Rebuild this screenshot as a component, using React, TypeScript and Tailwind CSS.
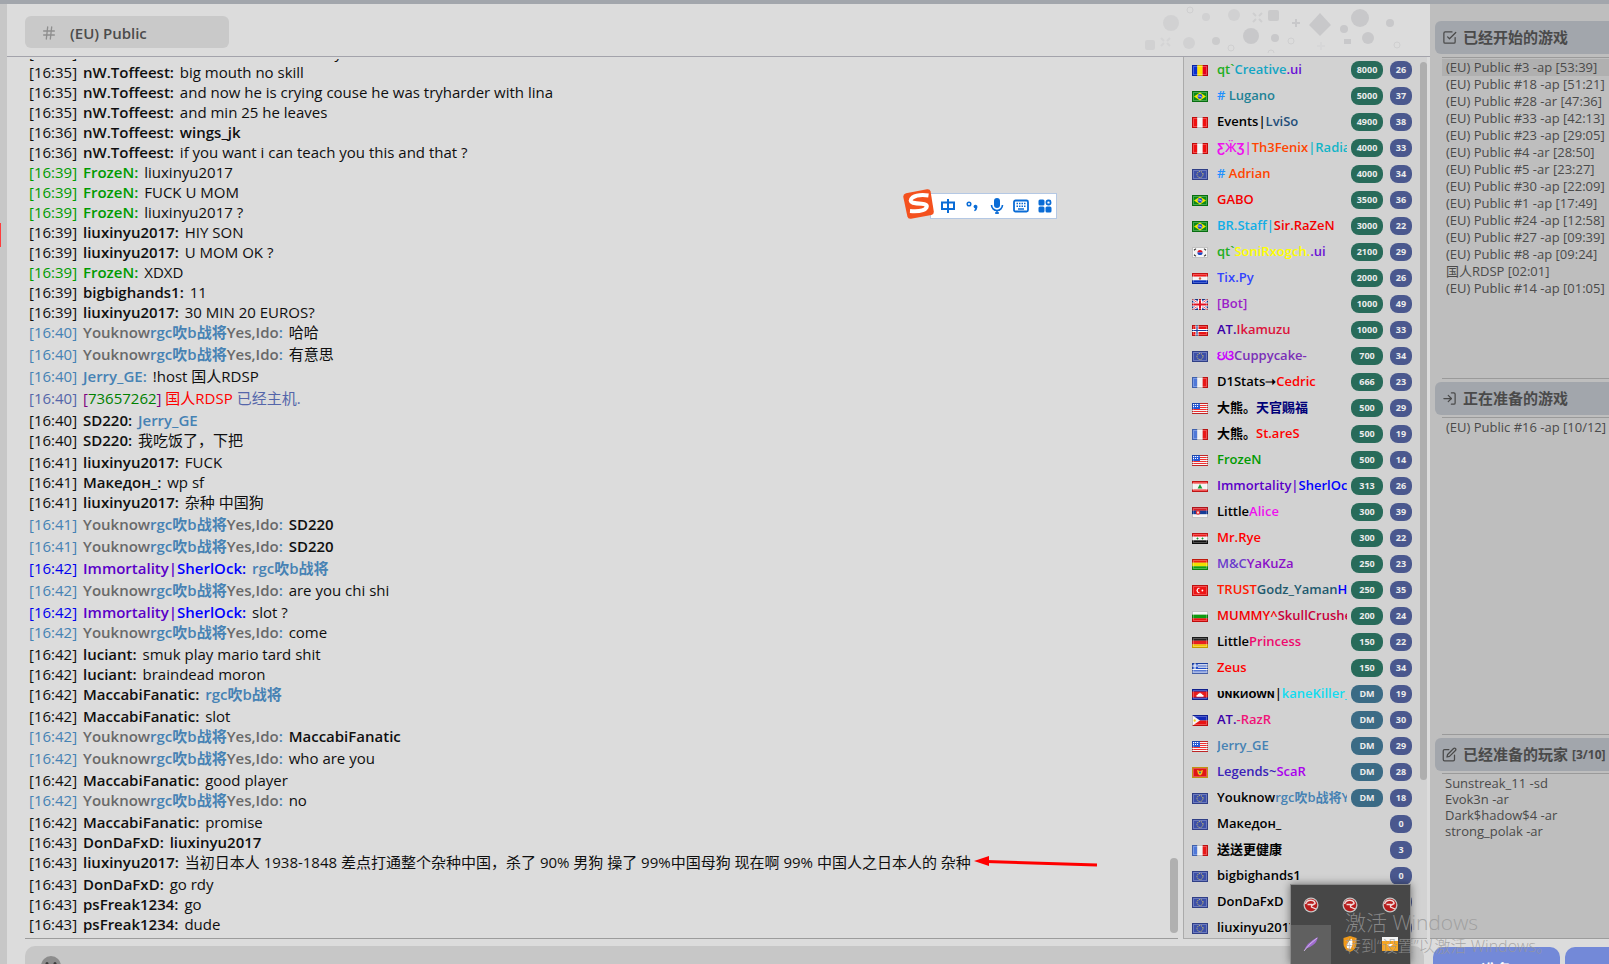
import type { ReactNode } from 'react'
import { FiCheckSquare, FiEdit, FiHash, FiLogIn } from 'react-icons/fi'

// ─── Types ────────────────────────────────────────────────────────────────────

// text, color, bold
type Part = [string, string?, boolean?]

interface Message {
  time: string
  timeColor?: string
  from?: Part[]
  body: Part[]
}

interface Player {
  flag: string
  name: Part[]
  rank?: string
  level: string
}

// ─── Data ─────────────────────────────────────────────────────────────────────

const INK = '#0f0f0f'
const STEEL = '#4682b4'
const GREEN = '#009a00'

const plain = (time: string, name: string, body: string): Message => ({
  time,
  from: [[name, INK]],
  body: [[body, INK]],
})

const mention = (time: string, name: string, body: string, color = INK): Message => ({
  time,
  from: [[name, INK]],
  body: [[body, color, true]],
})

const frozen = (body: string): Message => ({
  time: '16:39',
  timeColor: GREEN,
  from: [['FrozeN', GREEN]],
  body: [[body, INK]],
})

const youknow = (time: string, body: string, bold = false): Message => ({
  time,
  timeColor: STEEL,
  from: [
    ['Youknow', '#696969'],
    ['rgc吹b战将', STEEL],
    ['Yes,Ido', '#696969'],
  ],
  body: [[body, INK, bold]],
})

const sherlock = (body: Part): Message => ({
  time: '16:42',
  timeColor: '#0000ee',
  from: [
    ['Immortality|', '#5a00c8'],
    ['SherlOck', '#0000ff'],
  ],
  body: [body],
})

const messages: Message[] = [
  plain('16:35', 'nW.Toffeest', 'he lost mid alone and y'),
  plain('16:35', 'nW.Toffeest', 'big mouth no skill'),
  plain('16:35', 'nW.Toffeest', 'and now he is crying couse he was tryharder with lina'),
  plain('16:35', 'nW.Toffeest', 'and min 25 he leaves'),
  mention('16:36', 'nW.Toffeest', 'wings_jk'),
  plain('16:36', 'nW.Toffeest', 'if you want i can teach you this and that ?'),
  frozen('liuxinyu2017'),
  frozen('FUCK U MOM'),
  frozen('liuxinyu2017 ?'),
  plain('16:39', 'liuxinyu2017', 'HIY SON'),
  plain('16:39', 'liuxinyu2017', 'U MOM OK ?'),
  frozen('XDXD'),
  plain('16:39', 'bigbighands1', '11'),
  plain('16:39', 'liuxinyu2017', '30 MIN 20 EUROS?'),
  youknow('16:40', '哈哈'),
  youknow('16:40', '有意思'),
  { time: '16:40', timeColor: STEEL, from: [['Jerry_GE', STEEL]], body: [['!host 国人RDSP', INK]] },
  {
    time: '16:40',
    timeColor: '#5566aa',
    body: [
      ['[', '#800080'],
      ['73657262', '#008000'],
      [']', '#800080'],
      [' 国人RDSP', '#ff0000'],
      [' 已经主机.', '#5566aa'],
    ],
  },
  mention('16:40', 'SD220', 'Jerry_GE', STEEL),
  plain('16:40', 'SD220', '我吃饭了，下把'),
  plain('16:41', 'liuxinyu2017', 'FUCK'),
  plain('16:41', 'Македон_', 'wp sf'),
  plain('16:41', 'liuxinyu2017', '杂种 中国狗'),
  youknow('16:41', 'SD220', true),
  youknow('16:41', 'SD220', true),
  sherlock(['rgc吹b战将', STEEL, true]),
  youknow('16:42', 'are you chi shi'),
  sherlock(['slot ?', INK]),
  youknow('16:42', 'come'),
  plain('16:42', 'luciant', 'smuk play mario tard shit'),
  plain('16:42', 'luciant', 'braindead moron'),
  mention('16:42', 'MaccabiFanatic', 'rgc吹b战将', STEEL),
  plain('16:42', 'MaccabiFanatic', 'slot'),
  youknow('16:42', 'MaccabiFanatic', true),
  youknow('16:42', 'who are you'),
  plain('16:42', 'MaccabiFanatic', 'good player'),
  youknow('16:42', 'no'),
  plain('16:42', 'MaccabiFanatic', 'promise'),
  mention('16:43', 'DonDaFxD', 'liuxinyu2017'),
  plain(
    '16:43',
    'liuxinyu2017',
    '当初日本人 1938-1848 差点打通整个杂种中国，杀了 90% 男狗 操了 99%中国母狗 现在啊 99% 中国人之日本人的 杂种',
  ),
  plain('16:43', 'DonDaFxD', 'go rdy'),
  plain('16:43', 'psFreak1234', 'go'),
  plain('16:43', 'psFreak1234', 'dude'),
]

const players: Player[] = [
  { flag: 'ro', name: [['qt`', '#1fae1f'], ['Creative', '#12a5c4'], ['.ui', '#6a11d6']], rank: '8000', level: '26' },
  { flag: 'br', name: [['# ', '#1e90ff'], ['Lugano', '#1f8296']], rank: '5000', level: '37' },
  { flag: 'pe', name: [['Events|'], ['LviSo', '#1f4e79']], rank: '4900', level: '38' },
  { flag: 'pe', name: [['ƸӜƷ|', '#ee11ee'], ['Th3Fenix', '#ff4500'], ['|Radiant', '#12b5c8']], rank: '4000', level: '33' },
  { flag: 'eu', name: [['# ', '#1e90ff'], ['Adrian', '#ff4500']], rank: '4000', level: '34' },
  { flag: 'br', name: [['GABO', '#f40000']], rank: '3500', level: '36' },
  { flag: 'br', name: [['BR.Staff|', '#12aee6'], ['Sir.RaZeN', '#f40000']], rank: '3000', level: '22' },
  { flag: 'kr', name: [['qt`', '#1fae1f'], ['SoniRxogch.', '#ffff00'], ['.ui', '#6a11d6']], rank: '2100', level: '29' },
  { flag: 'py', name: [['Tix.Py', '#3344ff']], rank: '2000', level: '26' },
  { flag: 'gb', name: [['[Bot]', '#9a1fc8']], rank: '1000', level: '49' },
  { flag: 'no', name: [['AT.', '#3a00a8'], ['Ikamuzu', '#dc143c']], rank: '1000', level: '33' },
  { flag: 'eu', name: [['ઇଓ', '#c800ff'], ['Cuppycake-', '#7a2fb8']], rank: '700', level: '34' },
  { flag: 'fr', name: [['D1Stats➝'], ['Cedric', '#ff0000']], rank: '666', level: '23' },
  { flag: 'us', name: [['大熊。'], ['天官赐福', '#000078']], rank: '500', level: '29' },
  { flag: 'fr', name: [['大熊。'], ['St.areS', '#ff0000']], rank: '500', level: '19' },
  { flag: 'us', name: [['FrozeN', GREEN]], rank: '500', level: '14' },
  { flag: 'lb', name: [['Immortality|', '#5a00c8'], ['SherlOck', '#0000ff']], rank: '313', level: '26' },
  { flag: 'rs', name: [['Little'], ['Alice', '#ee11ee']], rank: '300', level: '39' },
  { flag: 'sy', name: [['Mr.Rye', '#ff0000']], rank: '300', level: '22' },
  { flag: 'bo', name: [['M&C', '#6a3ccc'], ['YaKuZa', '#8a10c8']], rank: '250', level: '23' },
  { flag: 'tr', name: [['TRUST', '#ff1a00'], ['Godz_Yaman', '#1f5a6e'], ['Ho', '#0000ff']], rank: '250', level: '35' },
  { flag: 'bg', name: [['MUMMY^', '#f40000'], ['SkullCrushe', '#c8003c']], rank: '200', level: '24' },
  { flag: 'de', name: [['Little'], ['Princess', '#ee0a6e']], rank: '150', level: '22' },
  { flag: 'gr', name: [['Zeus', '#ff0000']], rank: '150', level: '34' },
  { flag: 'kh', name: [['ᴜɴᴋиᴏᴡɴ|'], ['kaneKiller_', '#12dcf0']], rank: 'DM', level: '19' },
  { flag: 'ph', name: [['AT.', '#3a00a8'], ['-RazR', '#f01478']], rank: 'DM', level: '30' },
  { flag: 'us', name: [['Jerry_GE', STEEL]], rank: 'DM', level: '29' },
  { flag: 'me', name: [['Legends~', '#3a1fb8'], ['ScaR', '#aa00ee']], rank: 'DM', level: '28' },
  { flag: 'eu', name: [['Youknow'], ['rgc吹b战将Y', STEEL]], rank: 'DM', level: '18' },
  { flag: 'eu', name: [['Македон_']], level: '0' },
  { flag: 'fr', name: [['送送更健康']], level: '3' },
  { flag: 'eu', name: [['bigbighands1']], level: '0' },
  { flag: 'eu', name: [['DonDaFxD']], level: '0' },
  { flag: 'eu', name: [['liuxinyu2017']], level: '0' },
]

const startedGames = [
  '(EU) Public #3 -ap [53:39]',
  '(EU) Public #18 -ap [51:21]',
  '(EU) Public #28 -ar [47:36]',
  '(EU) Public #33 -ap [42:13]',
  '(EU) Public #23 -ap [29:05]',
  '(EU) Public #4 -ar [28:50]',
  '(EU) Public #5 -ar [23:27]',
  '(EU) Public #30 -ap [22:09]',
  '(EU) Public #1 -ap [17:49]',
  '(EU) Public #24 -ap [12:58]',
  '(EU) Public #27 -ap [09:39]',
  '(EU) Public #8 -ap [09:24]',
  '国人RDSP [02:01]',
  '(EU) Public #14 -ap [01:05]',
]

const readyPlayers = ['Sunstreak_11 -sd', 'Evok3n -ar', 'Dark$hadow$4 -ar', 'strong_polak -ar']

// ─── Flags ────────────────────────────────────────────────────────────────────

function Bands({ colors, vertical }: { colors: string[]; vertical?: boolean }) {
  const n = colors.length
  return (
    <>
      {colors.map((c, i) =>
        vertical ? (
          <rect key={i} x={(16 / n) * i} width={16 / n + 0.1} height="11" fill={c} />
        ) : (
          <rect key={i} y={(11 / n) * i} width="16" height={11 / n + 0.1} fill={c} />
        ),
      )}
    </>
  )
}

const flagArt: Record<string, ReactNode> = {
  ro: <Bands vertical colors={['#0a2fd0', '#ffe000', '#e8001a']} />,
  pe: <Bands vertical colors={['#f01010', '#f4f4f4', '#f01010']} />,
  fr: <Bands vertical colors={['#4f78d8', '#f0f0f0', '#e81818']} />,
  bo: <Bands colors={['#f02010', '#f0e000', '#10a010']} />,
  bg: <Bands colors={['#f4f4f4', '#109a10', '#f01010']} />,
  de: <Bands colors={['#222222', '#e82020', '#f4c400']} />,
  br: (
    <>
      <rect width="16" height="11" fill="#0a8a14" />
      <path d="M8 1.5 14 5.5 8 9.5 2 5.5Z" fill="#f4e800" />
      <circle cx="8" cy="5.5" r="2.4" fill="#2050d0" />
      <path d="M5.8 5q2.4-.4 4.2 1.4" stroke="#fff" strokeWidth=".6" fill="none" />
    </>
  ),
  eu: (
    <>
      <rect width="16" height="11" fill="#3c4fa8" />
      <circle cx="8" cy="5.5" r="3" fill="none" stroke="#f4e060" strokeWidth="1" strokeDasharray="1 1.1" />
    </>
  ),
  kr: (
    <>
      <rect width="16" height="11" fill="#f4f4f4" />
      <path d="M5.4 5.5a2.6 2.6 0 0 1 5.2 0Z" fill="#e01020" />
      <path d="M5.4 5.5a2.6 2.6 0 0 0 5.2 0Z" fill="#1848c8" />
      <path d="M2 3.2 4 1.6M2 7.8 4 9.4M12 1.6l2 1.6M12 9.4l2-1.6" stroke="#333" strokeWidth="1.2" />
    </>
  ),
  py: (
    <>
      <Bands colors={['#f01818', '#f4f4f4', '#0a2fc0']} />
      <circle cx="8" cy="5.5" r="1.2" fill="#d06040" />
    </>
  ),
  gb: (
    <>
      <rect width="16" height="11" fill="#2040a8" />
      <path d="m0 0 16 11M16 0 0 11" stroke="#fff" strokeWidth="2.4" />
      <path d="m0 0 16 11M16 0 0 11" stroke="#e02030" strokeWidth=".8" />
      <path d="M8 0v11M0 5.5h16" stroke="#fff" strokeWidth="4" />
      <path d="M8 0v11M0 5.5h16" stroke="#e01020" strokeWidth="2" />
    </>
  ),
  no: (
    <>
      <rect width="16" height="11" fill="#e81414" />
      <path d="M5 0v11M0 5.5h16" stroke="#fff" strokeWidth="3" />
      <path d="M5 0v11M0 5.5h16" stroke="#1c3c98" strokeWidth="1.2" />
    </>
  ),
  us: (
    <>
      <rect width="16" height="11" fill="#f4f4f4" />
      <path d="M0 .5h16M0 2.5h16M0 4.5h16M0 6.5h16M0 8.5h16M0 10.5h16" stroke="#ee3030" />
      <rect width="8" height="6" fill="#2458d8" />
      <path d="M1 1.5h6M1 3.5h6" stroke="#fff" strokeDasharray="1 1" />
    </>
  ),
  lb: (
    <>
      <rect width="16" height="11" fill="#f4f4f4" />
      <path d="M0 1.3h16M0 9.7h16" stroke="#ee1c1c" strokeWidth="2.6" />
      <path d="m8 3 2.4 4.4H5.6Z" fill="#149a34" />
    </>
  ),
  rs: (
    <>
      <Bands colors={['#d81c24', '#143c98', '#f4f4f4']} />
      <circle cx="6" cy="5.5" r="2.2" fill="#e83030" />
      <path d="M6 4v3M5 5.5h2" stroke="#fff" strokeWidth=".7" />
    </>
  ),
  sy: (
    <>
      <Bands colors={['#ee1c1c', '#f4f4f4', '#111111']} />
      <path d="M4.5 5.5h2M5.5 4.5v2M9.5 5.5h2M10.5 4.5v2" stroke="#149a34" strokeWidth=".9" />
    </>
  ),
  tr: (
    <>
      <rect width="16" height="11" fill="#ee1414" />
      <path d="M8.6 3.4a2.6 2.6 0 1 0 0 4.2 2.2 2.2 0 1 1 0-4.2Z" fill="#fff" />
      <circle cx="10.4" cy="5.5" r=".9" fill="#fff" />
    </>
  ),
  gr: (
    <>
      <rect width="16" height="11" fill="#f4f4f4" />
      <path d="M0 .6h16M0 3h16M0 5.4h16M0 7.8h16M0 10.2h16" stroke="#2450c8" strokeWidth="1.2" />
      <rect width="6" height="6" fill="#2450c8" />
      <path d="M3 0v6M0 3h6" stroke="#fff" strokeWidth="1.2" />
    </>
  ),
  kh: (
    <>
      <rect width="16" height="11" fill="#1428b0" />
      <rect y="2.5" width="16" height="6" fill="#e81c1c" />
      <path d="M4.5 7.8V6h1.2V4.8H7L8 3.6l1 1.2h1.3V6h1.2v1.8Z" fill="#fff" />
    </>
  ),
  ph: (
    <>
      <rect width="16" height="5.5" fill="#1428b8" />
      <rect y="5.5" width="16" height="5.5" fill="#e81414" />
      <path d="m0 0 8 5.5L0 11Z" fill="#f4f4f4" />
      <circle cx="2.6" cy="5.5" r="1.2" fill="#f4d020" />
    </>
  ),
  me: (
    <>
      <rect width="16" height="11" fill="#f0b818" />
      <rect x="1" y="1" width="14" height="9" fill="#e01414" />
      <path d="m5 3 3 1 3-1-1 4-2 1.4L6 7Z" fill="#f0c020" />
      <circle cx="8" cy="5.6" r="1" fill="#28708a" />
    </>
  ),
}

function Flag({ code }: { code: string }) {
  return (
    <svg viewBox="0 0 16 11" className="h-[11px] w-4 shrink-0" role="img" aria-label={code}>
      {flagArt[code]}
      <rect x="1.5" y="1.5" width="13" height="8" fill="none" stroke="#fff" strokeOpacity=".25" />
      <rect x=".5" y=".5" width="15" height="10" fill="none" stroke="#000" strokeOpacity=".2" />
    </svg>
  )
}

// ─── Chat ─────────────────────────────────────────────────────────────────────

function Parts({ parts }: { parts: Part[] }) {
  return (
    <>
      {parts.map(([text, color, bold], i) => (
        <span key={i} style={{ color }} className={bold ? 'font-semibold' : undefined}>
          {text}
        </span>
      ))}
    </>
  )
}

function MessageRow({ message }: { message: Message }) {
  const { time, timeColor = INK, from, body } = message
  // rows with Chinese glyphs are a little taller
  const hasCjk = /[\u4e00-\u9fff]/.test([...(from ?? []), ...body].map(p => p[0]).join(''))
  return (
    <li className={hasCjk ? 'h-[22px] shrink-0' : 'h-5 shrink-0'}>
      <span className="mr-[2px]" style={{ color: timeColor }}>
        [{time}]
      </span>{' '}
      {from && (
        <>
          <b className="mr-[2px] font-semibold" style={{ color: timeColor }}>
            <Parts parts={from} />:
          </b>{' '}
        </>
      )}
      <Parts parts={body} />
    </li>
  )
}

// ─── Header pattern ───────────────────────────────────────────────────────────

function Confetti() {
  return (
    <svg viewBox="0 0 290 52" className="h-[52px] w-[290px] shrink-0" aria-hidden="true">
      <g fill="#d1d1d2">
        <circle cx="31" cy="19" r="8" />
        <circle cx="66" cy="13" r="4" />
        <circle cx="49" cy="39" r="6" />
        <circle cx="94" cy="11" r="6" />
        <rect x="5" y="36" width="10" height="10" rx="2" />
        <circle cx="76" cy="37" r="4" fill="#cbcbcc" />
        <rect x="128" y="6" width="11" height="11" rx="2" fill="#cacacb" />
      </g>
      <g fill="#c8c8ca">
        <circle cx="111" cy="32" r="8" />
        <circle cx="135" cy="34" r="4" />
        <path d="m180 9 11 12-11 11-11-11Z" />
        <circle cx="220" cy="14" r="9" />
        <circle cx="204" cy="25" r="4" />
        <circle cx="228" cy="34" r="6" />
        <circle cx="250" cy="19" r="4" />
        <rect x="204" y="35" width="7" height="5" />
      </g>
      <g fill="none" stroke="#cfcfd0" strokeWidth="1">
        <circle cx="50" cy="6" r="3" />
        <circle cx="91" cy="44" r="3" />
        <circle cx="151" cy="37" r="3" />
        <circle cx="257" cy="41" r="3" />
        <path d="M128 49a3 3 0 1 1 6 0" />
      </g>
      <g fill="none" stroke="#cfcfd0" strokeWidth="2">
        <path d="m113 9 3 3M122 9l-3 3M113 18l3-3M122 18l-3-3" />
        <path d="m21 34 3 3M30 34l-3 3M21 42l3-3M30 42l-3-3" stroke="#d4d4d5" />
        <path d="M156 15v8M152 19h8" stroke="#c8c8ca" />
        <path d="M181 38v8M177 42h8" stroke="#d7d7d8" />
      </g>
    </svg>
  )
}

// ─── Side panel ───────────────────────────────────────────────────────────────

function PanelHeader({ icon, title, count }: { icon: ReactNode; title: string; count?: string }) {
  return (
    <h2 className="flex h-[33px] shrink-0 items-center gap-[6px] overflow-hidden rounded-l-md bg-[#a2a6ac] pl-[7px] text-[15px] font-bold whitespace-nowrap text-[#4a4a4a]">
      {icon}
      {title}
      {count && <span className="-ml-[2px] text-[12px]">{count}</span>}
    </h2>
  )
}

// ─── Overlays ─────────────────────────────────────────────────────────────────

function ImeBar() {
  return (
    <div className="absolute top-[189px] left-[903px] flex items-end">
      <svg viewBox="0 0 31 30" className="z-10 h-[30px] w-[31px]" aria-hidden="true">
        <path d="M3 4.2 24 .3q3-.4 3.6 2.2l3.2 20q.3 3-2.4 3.6L8 29.8q-3 .4-3.6-2.2L.3 8Q0 5 3 4.2Z" fill="#f4511e" />
        <path
          d="M25.500 6.500Q15 5 9.500 8.500 5.500 12 10 13.800q3 .8 8.500.9 6.500.6 5 3.800-2.500 4.500-16.500 3.500"
          fill="none"
          stroke="#fff"
          strokeWidth="4"
        />
      </svg>
      <div className="-ml-1 flex h-[26px] w-[127px] items-center justify-between border border-[#b4c8e4] bg-white pr-[3px] pl-[9px] text-[#0a6cd6]">
        <svg viewBox="0 0 16 16" className="size-4" fill="none" stroke="currentColor" strokeWidth="2">
          <path d="M2 4.5h12V11H2ZM8 1v14" />
        </svg>
        <svg viewBox="0 0 16 16" className="size-4">
          <circle cx="5" cy="6" r="1.8" fill="none" stroke="currentColor" strokeWidth="1.5" />
          <path d="M9.500 8.600a2 2 0 1 1 4 .4q-.3 3-2.600 4.200l-.9-1q1.200-.8 1.200-1.700-1.500-.3-1.700-1.900Z" fill="currentColor" />
        </svg>
        <svg viewBox="0 0 16 16" className="size-4">
          <rect x="5" y="0" width="6" height="10" rx="3" fill="currentColor" />
          <path d="M2.5 7a5.5 5.5 0 0 0 11 0M8 12.500V16M6 15h4" fill="none" stroke="currentColor" strokeWidth="1.6" />
        </svg>
        <svg viewBox="0 0 16 16" className="size-4" fill="none" stroke="currentColor" strokeWidth="1.8">
          <rect x="1" y="2.5" width="14" height="11" rx="1.5" />
          <path d="M3.5 5.500h9M3.500 8.200h9" strokeDasharray="1.500 1" strokeWidth="1.500" />
          <path d="M5 11h6" strokeWidth="1.5" />
        </svg>
        <svg viewBox="0 0 16 16" className="size-4" fill="currentColor">
          <rect x="1.5" y="1.5" width="6" height="6" rx="1.5" />
          <rect x="1.5" y="8.5" width="6" height="6" rx="1.5" />
          <rect x="8.5" y="8.5" width="6" height="6" rx="1.5" />
          <rect x="9.5" y="2.5" width="4" height="4" rx="1.5" fill="none" stroke="currentColor" strokeWidth="1.8" />
        </svg>
      </div>
    </div>
  )
}

function RedBall() {
  return (
    <svg viewBox="0 0 16 16" className="size-4" aria-hidden="true">
      <circle cx="8" cy="8" r="7.5" fill="#c4c4c4" />
      <circle cx="8" cy="8" r="6.2" fill="#b81c1c" />
      <path d="M2.500 7Q4 3 8 3.200q4 .3 4 3.300L8.500 8.500" fill="none" stroke="#f0dcdc" strokeWidth="1.500" />
      <path d="M4.500 7.500h4v2.500L13 12" fill="none" stroke="#f0dcdc" strokeWidth="1.300" />
    </svg>
  )
}

function TrayPopup() {
  return (
    <div className="absolute right-[198px] bottom-0 grid h-20 w-[121px] grid-cols-3 grid-rows-2 border border-b-0 border-[#8c8c8c] bg-[#474747] shadow-[0_0_8px_rgba(0,0,0,0.45)]">
      {[0, 1, 2].map(i => (
        <div key={i} className="flex items-center justify-center">
          <RedBall />
        </div>
      ))}
      <div className="flex items-center justify-center bg-[#606060]">
        <svg viewBox="0 0 16 16" className="size-4" aria-hidden="true">
          <path d="M1 15Q3 7 15 1q-1 5-5 8-3 2.500-7 3.500Z" fill="#a06cd0" />
          <path d="M1 15Q6 8 14 2" fill="none" stroke="#e0c8f4" strokeWidth=".8" />
        </svg>
      </div>
      <div className="flex items-center justify-center">
        <svg viewBox="0 0 16 16" className="size-4" aria-hidden="true">
          <path d="m8 0 6.500 2v6q0 5-6.500 8-6.500-3-6.500-8V2Z" fill="#f09a18" />
          <path d="M9.500 2.500Q12 8 8.500 13L5 12q-1.500-4 4.500-9.500Z" fill="#fff" />
        </svg>
      </div>
      <div className="flex items-center justify-center">
        <svg viewBox="0 0 16 14" className="h-[14px] w-4" aria-hidden="true">
          <rect width="16" height="14" fill="#f5a623" />
          <rect width="16" height="4" fill="#f4f4f4" />
          <path d="m5 7 3 3 3-3Z" fill="#fff" />
        </svg>
      </div>
    </div>
  )
}

// ─── App ──────────────────────────────────────────────────────────────────────

export default function App() {
  return (
    <div className="relative flex h-screen flex-col overflow-hidden bg-[#dcdcdc] font-['Open_Sans','Noto_Sans_CJK_SC',sans-serif]">
      <div className="h-1 shrink-0 bg-[#a2a6ac]" />
      <div className="flex min-h-0 flex-1">
        <div className="w-[7px] shrink-0 bg-[#c7c7c7]" />

        {/* Channel column */}
        <main className="flex min-w-0 flex-1 flex-col">
          <header className="flex h-[53px] shrink-0 items-start justify-between border-b border-[#a3a3ab] pl-[18px]">
            <button className="mt-3 flex h-8 w-[204px] items-center gap-[13px] rounded-md bg-[#c9c9c9] pt-[2px] pl-4 text-[15px] font-semibold text-[#4c4c4c]">
              <FiHash size={16} className="text-[#8e8e8e]" />
              (EU) Public
            </button>
            <Confetti />
          </header>

          <div className="flex min-h-0 flex-1">
            <div className="ml-[18px] flex min-w-0 flex-1 border-b border-[#9c9c9c] pt-[2px]">
              <ul className="flex min-w-0 flex-1 flex-col justify-end overflow-hidden pb-1 pl-1 text-[15px] leading-5 whitespace-nowrap">
                {messages.map((m, i) => (
                  <MessageRow key={i} message={m} />
                ))}
              </ul>
              <div className="mb-[5px] h-[75px] w-2 self-end rounded-full bg-[#b0b0b0]" />
            </div>

            <div className="mr-[3px] ml-[5px] flex w-[244px] shrink-0 border-b border-l border-[#ababab] bg-[#d2d2d2]">
              <ul className="min-w-0 flex-1 overflow-hidden text-[13px] font-semibold text-black">
                {players.map((p, i) => (
                  <li key={i} className="flex h-[26px] items-center pl-2">
                    <Flag code={p.flag} />
                    <span className="ml-[9px] w-[130px] shrink-0 overflow-hidden whitespace-nowrap">
                      <Parts parts={p.name} />
                    </span>
                    <span className="ml-1 flex flex-1 items-center text-[9px] font-bold text-[#ececec]">
                      {p.rank && (
                        <span
                          className={`flex h-[18px] w-8 items-center justify-center rounded-lg ${p.rank === 'DM' ? 'bg-[#3b6b85]' : 'bg-[#286b5a]'}`}
                        >
                          {p.rank}
                        </span>
                      )}
                      <span className="mr-2 ml-auto flex h-[18px] w-[22px] items-center justify-center rounded-lg bg-[#4a588e]">
                        {p.level}
                      </span>
                    </span>
                  </li>
                ))}
              </ul>
              <div className="mt-[5px] h-[718px] w-[7px] rounded-full bg-[#aeaeae]" />
            </div>
          </div>
        </main>

        {/* Games column */}
        <aside className="flex w-[179px] shrink-0 flex-col border-b border-[#9c9c9c] bg-[#bebebe] pt-[17px] pl-[5px] text-[13px] text-[#4a4a4a]">
          <section className="flex h-[358px] shrink-0 flex-col">
            <PanelHeader icon={<FiCheckSquare size={15} className="shrink-0" />} title="已经开始的游戏" />
            <ul className="mt-[3px] ml-[7px] flex-1 border-y border-[#9a9a9a] pt-px">
              {startedGames.map((g, i) => (
                <li
                  key={g}
                  className={`h-[17px] pl-1 leading-[17px] whitespace-nowrap ${i === 0 ? 'bg-[#b0b0b0]' : ''}`}
                >
                  {g}
                </li>
              ))}
            </ul>
          </section>
          <section className="flex min-h-0 flex-1 flex-col pt-[3px]">
            <PanelHeader icon={<FiLogIn size={15} className="shrink-0" />} title="正在准备的游戏" />
            <ul className="mt-[2px] ml-[7px] flex-1 border-y border-[#9a9a9a] pt-px">
              <li className="h-[17px] pl-1 leading-[17px] whitespace-nowrap">(EU) Public #16 -ap [10/12]</li>
            </ul>
          </section>
          <section className="flex h-[203px] shrink-0 flex-col pt-[3px]">
            <PanelHeader icon={<FiEdit size={15} className="shrink-0" />} title="已经准备的玩家" count="[3/10]" />
            <ul className="mt-[2px] ml-[7px] flex-1 border-t border-[#9a9a9a] pt-px">
              {readyPlayers.map(p => (
                <li key={p} className="h-4 pl-[3px] leading-4 whitespace-nowrap">
                  {p}
                </li>
              ))}
            </ul>
          </section>
        </aside>
      </div>

      {/* Bottom bar, cut off by the window edge */}
      <div className="flex h-[25px] shrink-0">
        <div className="w-[7px] bg-[#c7c7c7]" />
        <div className="mt-[7px] mr-[9px] ml-[18px] h-[44px] flex-1 rounded-[10px] bg-[#c7c7c7] pt-[10px] pl-4">
          <svg viewBox="0 0 20 20" className="size-5" aria-hidden="true">
            <circle cx="10" cy="10" r="10" fill="#8d8d8d" />
            <circle cx="6" cy="7.5" r="1.5" fill="#3c3c3c" />
            <circle cx="14" cy="7.5" r="1.5" fill="#3c3c3c" />
          </svg>
        </div>
        <div className="mt-2 flex w-[176px] gap-[5px] font-bold text-white">
          <button className="h-[44px] w-[127px] shrink-0 rounded-[10px] bg-[#7389d8] text-[15px]">准备</button>
          <button className="h-[44px] w-[60px] shrink-0 rounded-[10px] bg-[#7389d8] pl-4 text-left text-[15px]">AP</button>
        </div>
      </div>

      {/* Overlays */}
      <div className="absolute top-[223px] left-0 h-6 w-px bg-[#ff3b3b]" />
      <ImeBar />
      <svg viewBox="0 0 124 12" className="absolute top-[856px] left-[974px] h-3 w-[124px]" aria-hidden="true">
        <path d="M12 5.5 123 9" stroke="#ff0000" strokeWidth="3" />
        <path d="M0 5 15 0v10Z" fill="#ff0000" />
      </svg>
      <TrayPopup />
      <div className="pointer-events-none absolute right-[60px] bottom-[8px] w-[204px] font-light whitespace-nowrap text-[#989898]/80">
        <p className="text-[21px] leading-7">激活 Windows</p>
        <p className="text-[16px] leading-5">转到“设置”以激活 Windows。</p>
      </div>
    </div>
  )
}
